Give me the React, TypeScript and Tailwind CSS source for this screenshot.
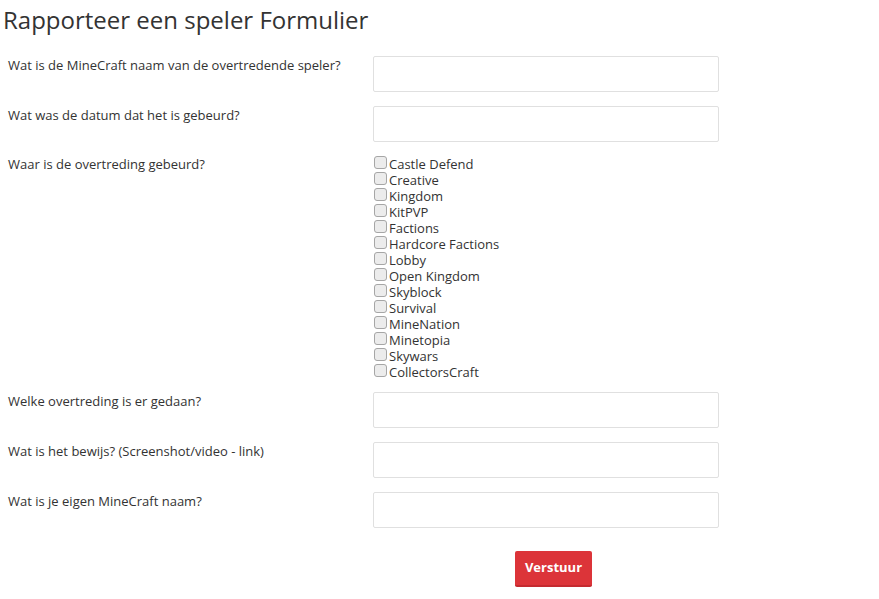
const servers = [
  "Castle Defend",
  "Creative",
  "Kingdom",
  "KitPVP",
  "Factions",
  "Hardcore Factions",
  "Lobby",
  "Open Kingdom",
  "Skyblock",
  "Survival",
  "MineNation",
  "Minetopia",
  "Skywars",
  "CollectorsCraft",
]

function TextRow({ label }: { label: string }) {
  return (
    <div className="flex items-start">
      <label className="w-[373px] pl-[8px] leading-[18px]">{label}</label>
      <input
        type="text"
        className="h-[36px] w-[346px] rounded-[2px] border border-[#e0e0e0] bg-white outline-none"
      />
    </div>
  )
}

export default function App() {
  return (
    <div className="min-h-[599px] bg-white font-['Open_Sans',sans-serif] text-[13px] text-[#333]">
      <h1 className="pl-[3px] pt-[3px] text-[24px] leading-[34px] font-normal text-[#333]">
        Rapporteer een speler Formulier
      </h1>

      <form className="mt-[19px] flex flex-col gap-[14px]">
        <TextRow label="Wat is de MineCraft naam van de overtredende speler?" />
        <TextRow label="Wat was de datum dat het is gebeurd?" />

        <div className="flex items-start">
          <label className="w-[373px] pl-[8px] leading-[16px]">Waar is de overtreding gebeurd?</label>
          <div className="flex flex-col pl-[1px]">
            {servers.map((s) => (
              <label key={s} className="flex h-[16px] items-center gap-[2px] leading-[16px]">
                <span className="mb-[3px] box-border h-[13px] w-[13px] rounded-[3px] border border-[#a6a6a6] bg-[#ececec]" />
                {s}
              </label>
            ))}
          </div>
        </div>

        <div className="mt-[-2px] flex flex-col gap-[14px]">
          <TextRow label="Welke overtreding is er gedaan?" />
          <TextRow label="Wat is het bewijs? (Screenshot/video - link)" />
          <TextRow label="Wat is je eigen MineCraft naam?" />
        </div>

        <div className="mt-[9px] pl-[515px]">
          <button
            type="button"
            className="h-[36px] w-[77px] rounded-[2px] border-b-2 border-[#c42a2f] bg-[#dc3439] text-[13px] font-bold text-white"
          >
            Verstuur
          </button>
        </div>
      </form>
    </div>
  )
}
